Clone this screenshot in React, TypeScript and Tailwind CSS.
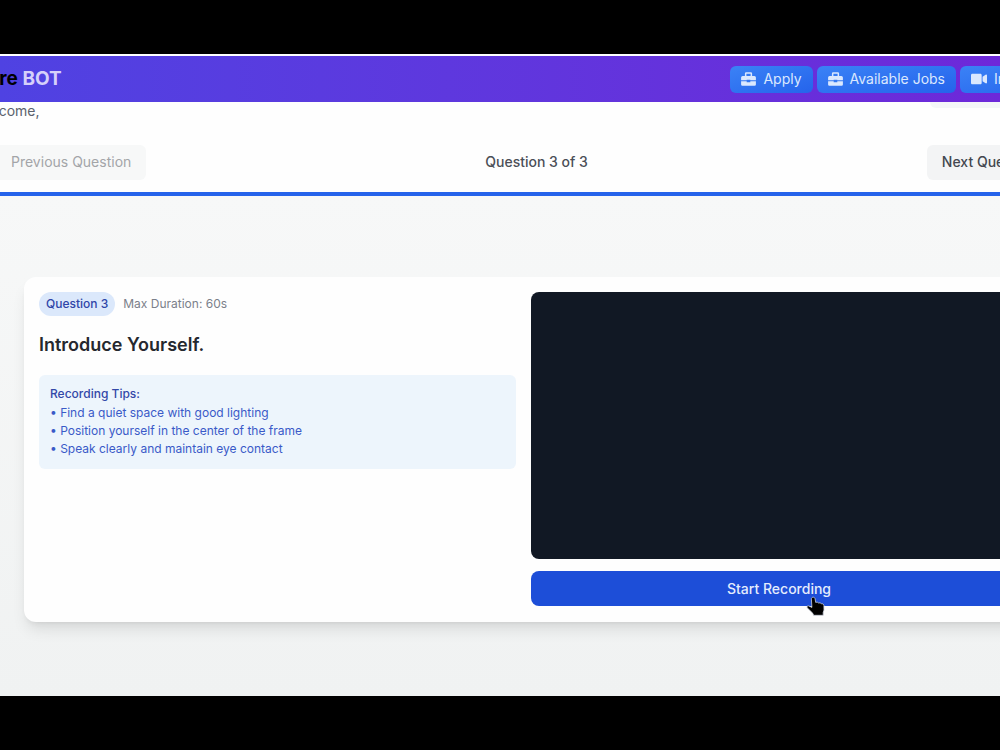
import { FaVideo } from "react-icons/fa";
import type { ReactNode } from "react";

const tips = [
  "Find a quiet space with good lighting",
  "Position yourself in the center of the frame",
  "Speak clearly and maintain eye contact",
];

function Briefcase() {
  return (
    <svg className="h-[14px] w-[15px] shrink-0" viewBox="0 0 15 14" fill="currentColor" aria-hidden="true">
      <path
        fillRule="evenodd"
        d="M5.200.300h4.600a1.300 1.300 0 0 1 1.300 1.300V3.900h2.300A1.500 1.500 0 0 1 14.900 5.400V8.300H9.300V7.700H5.700V8.300H.1V5.400A1.500 1.500 0 0 1 1.600 3.900H3.900V1.600A1.300 1.300 0 0 1 5.200.300zM5.400 1.700V3.900H9.600V1.700z"
      />
      <path d="M.1 9.300H5.700V10.200H9.300V9.300H14.900V12.400A1.300 1.300 0 0 1 13.600 13.700H1.400A1.300 1.300 0 0 1 .1 12.400z" />
    </svg>
  );
}

function NavButton({
  icon,
  className = "",
  children,
}: {
  icon: ReactNode;
  className?: string;
  children: ReactNode;
}) {
  return (
    <button
      type="button"
      className={`flex h-[27px] shrink-0 items-center gap-[7px] rounded-md bg-gradient-to-br from-[#3b82f6] to-[#2563eb] px-[11px] text-sm text-[#dbe8fe] ${className}`}
    >
      {icon}
      {children}
    </button>
  );
}

function Cursor() {
  return (
    <svg
      className="pointer-events-none absolute top-[25px] left-[275px] h-[21px] w-[21px]"
      viewBox="0 0 21 21"
      aria-hidden="true"
    >
      <path
        d="M7.2 1.2c1 0 1.7.7 1.9 1.6l.6 3.600 1.500-.3 1.400.9 1.500-.2 1.200.9 1.500.1 1.100 1.300.1 5-.8 2.200v3H7.600l-.8-2-5.600-5.500c-.8-.9.2-2.300 1.500-1.900l3.200 1.500L5.400 3.100c-.2-1 .7-1.900 1.800-1.900z"
        fill="#000"
        stroke="#cbd0da"
        strokeWidth="0.8"
      />
    </svg>
  );
}

export default function App() {
  return (
    <div className="flex min-h-screen flex-col overflow-hidden bg-black pt-[54px] pb-[54px] font-['Inter',sans-serif]">
      <header className="border-t-2 border-white bg-gradient-to-r from-[#4f42e2] to-[#6d28d9]">
        <div className="-mr-[72px] flex h-[46px] items-center justify-between">
          <a href="#" className="-ml-[20px] text-[19px] font-bold text-black">
            Hire <span className="text-[#d6d0fa]">BOT</span>
          </a>
          <nav className="flex items-center gap-1">
            <NavButton icon={<Briefcase />}>Apply</NavButton>
            <NavButton icon={<Briefcase />}>Available Jobs</NavButton>
            <NavButton className="w-28" icon={<FaVideo className="size-4" />}>
              Interview
            </NavButton>
          </nav>
        </div>
      </header>

      <section className="border-b-4 border-[#2563eb] bg-[#fefefe]">
        <div className="-mr-[72px] -ml-[26px] flex h-[43px] items-start justify-between">
          <p className="text-sm leading-[18px] text-[#5b626d]">Welcome,</p>
          <span className="h-[6px] w-[142px] rounded-b-md bg-[#f4f6f8]" />
        </div>
        <div className="-mr-[52px] -ml-1 flex items-center justify-between pb-3">
          <button
            type="button"
            disabled
            className="h-[35px] rounded-r-md bg-[#f7f8f8] px-[15px] pb-px text-sm text-[#a3a5a8]"
          >
            Previous Question
          </button>
          <p className="pb-px text-sm font-medium text-[#4b4f57]">Question 3 of 3</p>
          <button
            type="button"
            className="h-[35px] rounded-md bg-[#f3f4f5] px-[15px] pb-px text-sm font-medium text-[#43474f]"
          >
            Next Question
          </button>
        </div>
      </section>

      <main className="flex-1 bg-gradient-to-b from-[#f7f8f8] to-[#f0f2f2] pt-[81px] pb-[73px]">
        <section className="-mr-[42px] ml-6 grid grid-cols-[477fr_496fr] gap-[15px] rounded-xl bg-[#fefefe] p-[15px] pb-4 shadow-lg">
          <div>
            <div className="flex items-center gap-2 text-xs">
              <span className="rounded-full bg-[#dbe8fb] px-[7px] py-1 font-medium text-[#2f45a8]">
                Question 3
              </span>
              <span className="text-[#7b808a]">Max Duration: 60s</span>
            </div>
            <h1 className="mt-[15px] text-lg font-semibold text-[#25282e]">Introduce Yourself.</h1>
            <div className="mt-4 rounded-md bg-[#edf5fc] p-[11px] text-xs">
              <h2 className="font-medium text-[#3348a8]">Recording Tips:</h2>
              <ul className="mt-[2px] leading-[18px] text-[#3a5ac8]">
                {tips.map((tip) => (
                  <li key={tip}>• {tip}</li>
                ))}
              </ul>
            </div>
          </div>
          <div>
            <div className="h-[267px] rounded-lg bg-[#111824]" />
            <div className="relative mt-3">
              <button
                type="button"
                className="h-[35px] w-full rounded-lg bg-[#1d4ed8] text-sm font-medium text-[#e4ecfd]"
              >
                Start Recording
              </button>
              <Cursor />
            </div>
          </div>
        </section>
      </main>
    </div>
  );
}
